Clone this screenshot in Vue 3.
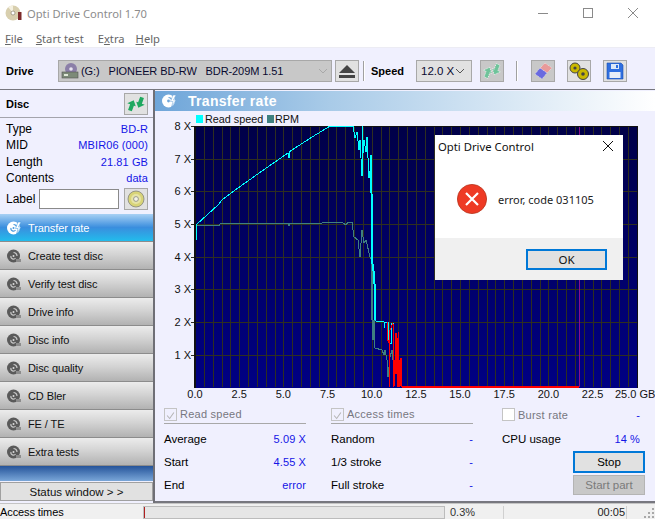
<template>
  <div class="window">
    <!-- title bar -->
    <div class="titlebar">
      <svg class="app-icon" width="18" height="18" viewBox="0 0 18 18">
        <circle cx="8" cy="9" r="7.5" fill="#d8cfae" />
        <path d="M8 9 L3 3 A7.5 7.5 0 0 1 8 1.5 Z" fill="#f4f0e0" />
        <circle cx="8" cy="9" r="2" fill="#fff" stroke="#8d8570" stroke-width=".7" />
        <rect x="13" y="8" width="3.5" height="8" fill="#7c2a2a" />
      </svg>
      <span class="title-text">Opti Drive Control 1.70</span>
      <div class="win-controls">
        <svg width="12" height="12" viewBox="0 0 12 12"><path d="M1 6.5H11" stroke="#8a8a8a" fill="none" /></svg>
        <svg width="12" height="12" viewBox="0 0 12 12"><rect x="1.5" y="1.5" width="9" height="9" stroke="#8a8a8a" fill="none" /></svg>
        <svg width="12" height="12" viewBox="0 0 12 12"><path d="M1 1L11 11M11 1L1 11" stroke="#8a8a8a" fill="none" /></svg>
      </div>
    </div>

    <div class="menubar">
      <span class="menu m1"><u>F</u>ile</span>
      <span class="menu m2"><u>S</u>tart test</span>
      <span class="menu m3">E<u>x</u>tra</span>
      <span class="menu m4"><u>H</u>elp</span>
    </div>

    <!-- toolbar -->
    <div class="toolbar">
      <span class="tb-label drive-label">Drive</span>
      <div class="combo drive-combo">
        <svg width="19" height="18" viewBox="0 0 19 18">
          <circle cx="10" cy="7" r="6" fill="#8b7fa8" />
          <circle cx="10" cy="7" r="1.8" fill="#e8e4f0" />
          <rect x="1" y="10" width="16" height="6" fill="#7c8a78" stroke="#555" stroke-width=".6" />
          <rect x="3" y="12" width="4" height="2" fill="#dfe8d8" />
        </svg>
        <span class="drive-text">(G:)&nbsp;&nbsp;&nbsp;PIONEER BD-RW&nbsp;&nbsp;&nbsp;BDR-209M 1.51</span>
        <svg class="chev" width="10" height="6" viewBox="0 0 10 6"><path d="M1 1L5 5L9 1" stroke="#a8a8a8" fill="none" /></svg>
      </div>
      <button class="tbtn eject">
        <svg width="16" height="13" viewBox="0 0 16 13">
          <path d="M8 0L16 8H0Z" fill="#444" />
          <rect y="10" width="16" height="3" fill="#444" />
        </svg>
      </button>
      <div class="tb-sep s1"></div>
      <span class="tb-label speed-label">Speed</span>
      <div class="combo speed-combo">
        <span>12.0 X</span>
        <svg width="10" height="6" viewBox="0 0 10 6"><path d="M1 1L5 5L9 1" stroke="#555" fill="none" /></svg>
      </div>
      <button class="tbtn dim b1">
        <svg width="20" height="18" viewBox="0 0 20 18">
          <path d="M6 5L10 10H8V16H4V10H1Z" transform="rotate(20 6 10)" fill="#6fc39a" stroke="#fff" stroke-width=".7" stroke-dasharray="1 1" />
          <path d="M14 13L10 8H12V2H16V8H19Z" transform="rotate(20 14 8)" fill="#6fc39a" stroke="#fff" stroke-width=".7" stroke-dasharray="1 1" />
        </svg>
      </button>
      <div class="tb-sep s2"></div>
      <button class="tbtn dim b2">
        <svg width="20" height="18" viewBox="0 0 20 18">
          <path d="M12 1L19 6L14 11L7 6Z" fill="#e89a9a" stroke="#fff" stroke-width=".5" stroke-dasharray="1 1" />
          <path d="M7 6L14 11L9 17L2 12Z" fill="#6a6ae0" stroke="#fff" stroke-width=".5" stroke-dasharray="1 1" />
        </svg>
      </button>
      <button class="tbtn b3">
        <svg width="20" height="18" viewBox="0 0 20 18">
          <circle cx="6" cy="6" r="5" fill="#c9b800" stroke="#444" />
          <circle cx="14" cy="12" r="5.5" fill="#c9b800" stroke="#444" />
          <circle cx="6" cy="6" r="1.6" fill="#444" />
          <circle cx="14" cy="12" r="1.8" fill="#444" />
        </svg>
      </button>
      <button class="tbtn b4">
        <svg width="18" height="18" viewBox="0 0 18 18">
          <path d="M1 1H15L17 3V17H1Z" fill="#2f6fe0" stroke="#1b4fb0" stroke-width=".6" />
          <rect x="5" y="2" width="8" height="5" fill="#dce8f8" />
          <rect x="10" y="3" width="2" height="3" fill="#2f6fe0" />
          <rect x="3.5" y="10" width="11" height="6" fill="#e8eef8" />
        </svg>
      </button>
    </div>

    <div class="main">
      <!-- left column -->
      <aside class="sidebar">
        <div class="disc-head">
          <span class="bold">Disc</span>
          <button class="tbtn small">
            <svg width="20" height="18" viewBox="0 0 20 18">
              <path d="M6 5L10 10H8V16H4V10H1Z" transform="rotate(20 6 10)" fill="#1fa860" />
              <path d="M14 13L10 8H12V2H16V8H19Z" transform="rotate(20 14 8)" fill="#1fa860" />
            </svg>
          </button>
        </div>
        <div class="disc-info">
          <div v-for="row in discRows" :key="row[0]" class="info-row">
            <span>{{ row[0] }}</span><span class="val">{{ row[1] }}</span>
          </div>
          <div class="label-row">
            <span class="label-name">Label</span>
            <div class="label-input"></div>
            <button class="tbtn small disc-btn">
              <svg width="18" height="18" viewBox="0 0 18 18">
                <circle cx="9" cy="9" r="8" fill="#d8d478" stroke="#777" stroke-width=".7" />
                <circle cx="9" cy="9" r="5" fill="#e6e4a8" />
                <circle cx="9" cy="9" r="2.4" fill="#f4f4e8" stroke="#777" stroke-width=".7" />
              </svg>
            </button>
          </div>
        </div>
        <nav class="nav">
          <div v-for="(item, i) in navItems" :key="item" class="nav-item" :class="{ active: i === 0 }">
            <svg width="16" height="16" viewBox="0 0 16 16">
              <circle cx="7.5" cy="8" r="6.5" :fill="i === 0 ? '#fff' : '#5a5a5a'" />
              <path d="M7.5 4.5A3.5 3.5 0 0 1 11 8" fill="none" :stroke="i === 0 ? '#4a9ade' : '#c8c8c8'" stroke-width="1.2" />
              <path d="M5 8A2.5 2.5 0 0 0 9.5 10" fill="none" :stroke="i === 0 ? '#4a9ade' : '#c8c8c8'" stroke-width="1.2" />
              <circle cx="7.5" cy="8" r="1" :fill="i === 0 ? '#4a9ade' : '#d8d8d8'" />
              <path v-if="i === 0" d="M12 2L15 2L12.5 7L15 7L10.5 14L12 8.5L9.5 8.5Z" fill="#fff" stroke="#3f97de" stroke-width=".5" />
              <rect v-else x="10" y="11" width="5" height="3" fill="#8c8c8c" />
            </svg>
            <span>{{ item }}</span>
          </div>
        </nav>
        <div class="nav-band"></div>
        <button class="status-btn">Status window &gt; &gt;</button>
      </aside>

      <!-- right panel -->
      <section class="panel">
        <div class="panel-head">
          <svg width="16" height="16" viewBox="0 0 16 16">
            <circle cx="7.5" cy="8" r="6.5" fill="#fff" />
            <path d="M7.5 4.5A3.5 3.5 0 0 1 11 8" fill="none" stroke="#6ea5d9" stroke-width="1.2" />
            <circle cx="7.5" cy="8" r="1.4" fill="#6ea5d9" />
            <path d="M12 2L15 2L12.5 7L15 7L10.5 14L12 8.5L9.5 8.5Z" fill="#fff" stroke="#6ea5d9" stroke-width=".5" />
          </svg>
          <span>Transfer rate</span>
        </div>

        <svg class="chart" width="500" height="289" viewBox="155 111 500 289">
          <defs>
            <linearGradient id="plotbg" x1="0" y1="0" x2="0" y2="1">
              <stop offset="0" stop-color="#000048" />
              <stop offset="1" stop-color="#000084" />
            </linearGradient>
          </defs>
          <rect x="196" y="115" width="7" height="8" fill="#00ffff" />
          <text x="205" y="123" class="legend">Read speed</text>
          <rect x="267" y="115" width="7" height="8" fill="#3f8080" />
          <text x="275" y="123" class="legend">RPM</text>

          <rect x="195" y="126" width="442" height="262" fill="url(#plotbg)" />
          <g shape-rendering="crispEdges" stroke="#2e2e20">
            <line v-for="x in vLines" :key="'v' + x" :x1="x" :x2="x" y1="126" y2="387" />
            <line v-for="t in yTicks" :key="'h' + t.label" x1="191" x2="637" :y1="t.y" :y2="t.y" />
          </g>
          <line x1="579" x2="579" y1="126" y2="387" stroke="#8a0f8a" shape-rendering="crispEdges" />
          <g shape-rendering="crispEdges" stroke="#111">
            <line x1="195" x2="195" y1="126" y2="388" stroke-width="2" />
            <line x1="195" x2="637" y1="126" y2="126" />
            <line x1="637" x2="637" y1="126" y2="388" />
          </g>

          <g fill="none" shape-rendering="crispEdges">
            <polyline :points="rpmLine" stroke="#3f8080" stroke-width="1" />
            <polyline :points="rpmThick" stroke="#3f8080" stroke-width="2" />
            <polyline :points="speedLine" stroke="#00ffff" stroke-width="1" />
            <polyline :points="speedThick" stroke="#00ffff" stroke-width="2" />
            <polyline :points="speedTail" stroke="#00ffff" stroke-width="1" />
            <polyline :points="redLine" stroke="#ff0000" stroke-width="1" />
            <rect x="395" y="338" width="3" height="36" fill="#ff0000" />
            <line x1="402" x2="579" y1="387" y2="387" stroke="#ff0000" stroke-width="2" />
          </g>

          <text v-for="t in yTicks" :key="t.label" x="191" :y="t.y + 4" text-anchor="end" class="axis">{{ t.label }}</text>
          <text v-for="t in xTicks" :key="t.label" :x="t.x" y="398" text-anchor="middle" class="axis">{{ t.label }}</text>
          <text x="615" y="398" class="axis">25.0 GB</text>
        </svg>

        <!-- stats below the chart -->
        <div class="stats">
          <div class="col c1">
            <div class="check-row line">
              <span class="check on"><svg width="13" height="13" viewBox="0 0 13 13"><path d="M2.5 6.5L5.5 10L10.5 3" stroke="#b4b4b4" stroke-width="1.2" fill="none" /></svg></span>
              <span class="muted">Read speed</span>
            </div>
            <div class="stat"><span>Average</span><span class="val">5.09 X</span></div>
            <div class="stat"><span>Start</span><span class="val">4.55 X</span></div>
            <div class="stat"><span>End</span><span class="val">error</span></div>
          </div>
          <div class="col c2">
            <div class="check-row line">
              <span class="check on"><svg width="13" height="13" viewBox="0 0 13 13"><path d="M2.5 6.5L5.5 10L10.5 3" stroke="#b4b4b4" stroke-width="1.2" fill="none" /></svg></span>
              <span class="muted">Access times</span>
            </div>
            <div class="stat"><span>Random</span><span class="val">-</span></div>
            <div class="stat"><span>1/3 stroke</span><span class="val">-</span></div>
            <div class="stat"><span>Full stroke</span><span class="val">-</span></div>
          </div>
          <div class="col c3">
            <div class="check-row">
              <span class="check"></span>
              <span class="muted">Burst rate</span>
              <span class="val push">-</span>
            </div>
            <div class="stat"><span>CPU usage</span><span class="val">14 %</span></div>
            <button class="act stop">Stop</button>
            <button class="act start" disabled>Start part</button>
          </div>
        </div>
      </section>
    </div>

    <!-- status bar -->
    <div class="statusbar">
      <span class="sb-text">Access times</span>
      <div class="progress"><div class="bar"></div></div>
      <span class="sb-pct">0.3%</span>
      <span class="sb-time">00:05</span>
      <svg class="grip" width="12" height="12" viewBox="0 0 12 12">
        <g fill="#a8a8a8">
          <rect x="9" y="9" width="2" height="2" />
          <rect x="5" y="9" width="2" height="2" />
          <rect x="1" y="9" width="2" height="2" />
          <rect x="9" y="5" width="2" height="2" />
          <rect x="5" y="5" width="2" height="2" />
          <rect x="9" y="1" width="2" height="2" />
        </g>
      </svg>
    </div>

    <!-- message box over the chart -->
    <div class="dialog">
      <div class="dlg-title">
        <span>Opti Drive Control</span>
        <svg width="12" height="12" viewBox="0 0 12 12"><path d="M1 1L11 11M11 1L1 11" stroke="#111" fill="none" /></svg>
      </div>
      <div class="dlg-body">
        <svg width="30" height="30" viewBox="0 0 30 30">
          <circle cx="15" cy="15" r="14.6" fill="#ee3a24" stroke="#b8341c" stroke-width=".8" />
          <path d="M9 9L21 21M21 9L9 21" stroke="#fff" stroke-width="2.2" fill="none" />
        </svg>
        <span>error, code 031105</span>
      </div>
      <div class="dlg-foot"><button class="ok">OK</button></div>
    </div>
  </div>
</template>

<script setup>
import { computed } from 'vue';

const discRows = [
  ['Type', 'BD-R'],
  ['MID', 'MBIR06 (000)'],
  ['Length', '21.81 GB'],
  ['Contents', 'data']
];

const navItems = [
  'Transfer rate', 'Create test disc', 'Verify test disc', 'Drive info',
  'Disc info', 'Disc quality', 'CD Bler', 'FE / TE', 'Extra tests'
];

const X0 = 195;
const GB = 17.67;

// grid every half GB
const vLines = computed(() => {
  const out = [];
  for (let i = 1; i < 50; i++) out.push(Math.round(X0 + i * GB / 2));
  return out;
});

const yTicks = [8, 7, 6, 5, 4, 3, 2, 1].map((n) => ({
  label: n + ' X',
  y: Math.round(387.5 - n * 32.7)
}));

const xTicks = [0, 2.5, 5, 7.5, 10, 12.5, 15, 17.5, 20, 22.5].map((g) => ({
  label: g.toFixed(1),
  x: X0 + g * GB
}));

// curve points were read from the reference, in window pixels
const speedLine = '196,240 196,224 197,224 207,215 218,205 222,200 238,188 262,171 288,153 289,158 289,152 312,137 322,131 330,126 353,126 355,138 357,132 359,150 360,140 362,176 362,126 363,153 364,140 366,152 367,137 369,178 371,165 371,155';
const speedThick = '371,155 372,230 372,260 374,275 375,293 375,320';
const speedTail = '375,320 376,321 384,322 384,328 385,322 388,322 389,343 391,344 392,323 394,323';
const rpmLine = '196,225 208,225 219,226 220,224 240,223 288,223 289,226 290,223 322,223 330,222 342,222 346,225 348,222 352,222 354,237 358,240 360,257 362,230 364,243 366,240 370,257 372,260 372,303 373,340 374,320 375,348 382,350 384,355 385,350 387,360 388,377 390,357 392,350 394,370 396,373 398,360 400,380';
const rpmThick = '372,260 372,320';
const redLine = '387,322 387,338 389,343 389,387 390,330 393,323 394,387 396,333 398,387 398,332 400,387 401,358 402,387';
</script>

<style>
html, body {
  margin: 0;
  background: #f0f0fe;
}
</style>

<style scoped>
* {
  box-sizing: border-box;
}

.window {
  position: relative;
  width: 655px;
  height: 519px;
  overflow: hidden;
  display: flex;
  flex-direction: column;
  font-family: "Liberation Sans", Arial, sans-serif;
  font-size: 12px;
  color: #000;
  background: #f0f0fe;
}

button {
  font-family: inherit;
  font-size: 11.5px;
  padding: 0;
}

.titlebar {
  height: 26px;
  flex: none;
  display: flex;
  align-items: center;
  padding-left: 5px;
  background: #fff;
}

.title-text {
  margin-left: 4px;
  font-family: "Noto Sans", sans-serif;
  font-size: 11.2px;
  color: #8c8c8c;
}

.win-controls {
  margin-left: auto;
  display: flex;
  gap: 33px;
  padding-right: 16px;
}

.menubar {
  height: 21px;
  flex: none;
  display: flex;
  align-items: center;
  padding-top: 4px;
  background: #fff;
  font-family: "Noto Sans", sans-serif;
  font-size: 11.2px;
  color: #666;
}

.m1 { margin-left: 5px; }
.m2 { margin-left: 13px; }
.m3 { margin-left: 14px; }
.m4 { margin-left: 11px; }

.toolbar {
  height: 43px;
  flex: none;
  display: flex;
  align-items: center;
  padding-top: 5px;
  background: #f0f0fe;
  border-top: 1px solid #ececf4;
  border-bottom: 1px solid #77777f;
}

.tb-label {
  font-size: 11px;
  font-weight: bold;
}

.drive-label { margin-left: 6px; width: 52px; }

.combo {
  height: 22px;
  display: flex;
  align-items: center;
  border: 1px solid #a8a8a8;
}

.drive-combo {
  width: 274px;
  padding-left: 2px;
  background: #c8c8c8;
  color: #0a0a30;
}

.drive-text {
  margin-left: 1px;
  white-space: nowrap;
  font-size: 11px;
  letter-spacing: -0.1px;
}

.chev { margin-left: auto; margin-right: 3px; }

.tbtn {
  width: 24px;
  height: 22px;
  display: flex;
  align-items: center;
  justify-content: center;
  border: 1px solid #a8a8a8;
  background: #e1e1e1;
}

.tbtn.dim { background: #c8c8c8; }
.eject { margin-left: 3px; }

.tb-sep {
  width: 2px;
  height: 20px;
  background: #fff;
  border-left: 1px solid #a0a0a0;
}

.s1 { margin-left: 4px; }
.speed-label { margin-left: 6px; width: 45px; }

.speed-combo {
  width: 56px;
  padding: 0 6px 0 4px;
  justify-content: space-between;
  background: #e1e1e1;
  color: #0a0a30;
  font-size: 11.5px;
  white-space: nowrap;
}

.b1 { margin-left: 8px; }
.s2 { margin-left: 12px; }
.b2 { margin-left: 13px; }
.b3 { margin-left: 12px; }
.b4 { margin-left: 12px; }

.main {
  flex: 1;
  min-height: 0;
  display: flex;
}

.sidebar {
  width: 155px;
  flex: none;
  display: flex;
  flex-direction: column;
  border-right: 2px solid #6f6f76;
}

.disc-head {
  height: 28px;
  flex: none;
  display: flex;
  align-items: center;
  justify-content: space-between;
  padding: 0 5px 0 6px;
  border-bottom: 1px solid #a4a4ac;
}

.bold { font-weight: bold; font-size: 11px; }
.small { width: 24px; height: 22px; }

.disc-info {
  height: 96px;
  flex: none;
  padding: 3px 5px 0 6px;
}

.info-row {
  display: flex;
  justify-content: space-between;
  height: 16.4px;
  line-height: 16px;
}

.val { color: #1414e6; font-size: 11px; letter-spacing: 0.1px; }

.label-row {
  display: flex;
  align-items: center;
  margin-top: 1px;
  height: 22px;
}

.label-name { width: 33px; }

.label-input {
  width: 81px;
  height: 20px;
  background: #fff;
  border: 1px solid #8a8a8a;
}

.disc-btn { margin-left: 5px; }

.nav {
  flex: none;
}

.nav-item {
  height: 28px;
  display: flex;
  align-items: center;
  gap: 6px;
  padding-left: 6px;
  font-size: 11px;
  letter-spacing: -0.1px;
  color: #111;
  background: linear-gradient(#ececec, #d4d4d4 45%, #b2b2b2);
  border-bottom: 1px solid #8c8c8c;
}

.nav-item.active {
  color: #fff;
  background: linear-gradient(#a8d0f4, #3a8ede 50%, #22bcec);
}

.nav-band {
  height: 15px;
  flex: none;
  background: linear-gradient(#25549a, #7aa6d8);
}

.status-btn {
  height: 19px;
  margin-top: 1px;
  background: #e1e1e1;
  border: 1px solid #a0a0a0;
  color: #111;
}

.panel {
  flex: 1;
  min-width: 0;
  display: flex;
  flex-direction: column;
  margin-bottom: 3px;
  border-bottom: 2px solid #77777f;
}

.panel-head {
  height: 20px;
  flex: none;
  margin-top: 1px;
  display: flex;
  align-items: center;
  gap: 11px;
  padding-left: 6px;
  color: #fff;
  font-size: 14px;
  letter-spacing: 0.3px;
  font-weight: bold;
  background: linear-gradient(90deg, #6ea5d9, #a9cbe8 35%, #fff);
}

.chart {
  display: block;
  flex: none;
}

.legend {
  font-family: "Liberation Sans", Arial, sans-serif;
  font-size: 10.8px;
  fill: #111;
}

.axis {
  font-family: "Liberation Sans", Arial, sans-serif;
  font-size: 11px;
  fill: #111;
}

.stats {
  flex: 1;
  display: flex;
  padding-top: 5px;
}

.col { display: flex; flex-direction: column; }
.c1 { width: 142px; margin-left: 9px; }
.c2 { width: 142px; margin-left: 25px; }
.c3 { width: 138px; margin-left: 29px; }

.check-row {
  height: 19px;
  display: flex;
  align-items: center;
  gap: 3px;
  flex: none;
}

.check-row.line { border-bottom: 1px solid #a8a8a8; }

.check {
  width: 13px;
  height: 13px;
  background: #fff;
  border: 1px solid #c4c4c4;
  display: flex;
}

.check.on { background: #f0f0fe; }
.muted { color: #77777f; font-size: 11px; letter-spacing: 0.25px; }
.push { margin-left: auto; }

.stat {
  height: 23px;
  flex: none;
  display: flex;
  justify-content: space-between;
  align-items: center;
  font-size: 11.5px;
}

.col .check-row + .stat { margin-top: 3px; }

.act {
  flex: none;
  width: 72px;
  margin-left: 71px;
}

.stop {
  height: 22px;
  margin-top: 1px;
  background: #e1e1e1;
  border: 2px solid #0078d7;
}

.start {
  height: 20px;
  margin-top: 2px;
  background: #c8c8c8;
  border: 1px solid #b4b4b4;
  color: #7a7a7a;
}

.statusbar {
  height: 16px;
  margin-top: -3px;
  flex: none;
  display: flex;
  align-items: flex-end;
  background: #f0f0f0;
  border-top: 1px solid #c4c4c4;
  font-size: 11px;
  line-height: 13px;
}

.sb-text {
  width: 143px;
  flex: none;
  letter-spacing: -0.1px;
}

.progress {
  width: 302px;
  height: 13px;
  flex: none;
  background: #e6e6e6;
  border: 1px solid #bcbcbc;
}

.bar {
  width: 1px;
  height: 100%;
  background: #b02020;
}

.sb-pct {
  width: 59px;
  flex: none;
  padding-left: 5px;
  color: #333;
  border-right: 1px solid #d0d0d0;
}

.sb-time {
  width: 123px;
  flex: none;
  padding-right: 1px;
  text-align: right;
  color: #222;
  border-right: 1px solid #d0d0d0;
}

.grip { margin-left: auto; }

.dialog {
  position: absolute;
  left: 435px;
  top: 135px;
  width: 188px;
  height: 145px;
  display: flex;
  flex-direction: column;
  background: #fff;
  font-family: "Noto Sans", sans-serif;
}

.dlg-title {
  height: 22px;
  flex: none;
  display: flex;
  align-items: center;
  justify-content: space-between;
  padding: 0 9px 0 3px;
  font-size: 11.3px;
  color: #111;
}

.dlg-body {
  flex: 1;
  display: flex;
  align-items: center;
  gap: 11px;
  padding: 3px 0 0 22px;
  color: #222;
  font-size: 11px;
}

.dlg-foot {
  height: 42px;
  flex: none;
  display: flex;
  align-items: center;
  justify-content: flex-end;
  padding-right: 16px;
  background: #f0f0f0;
}

.ok {
  width: 81px;
  height: 21px;
  font-family: "Noto Sans", sans-serif;
  background: #e1e1e1;
  border: 2px solid #0078d7;
  color: #111;
}
</style>
